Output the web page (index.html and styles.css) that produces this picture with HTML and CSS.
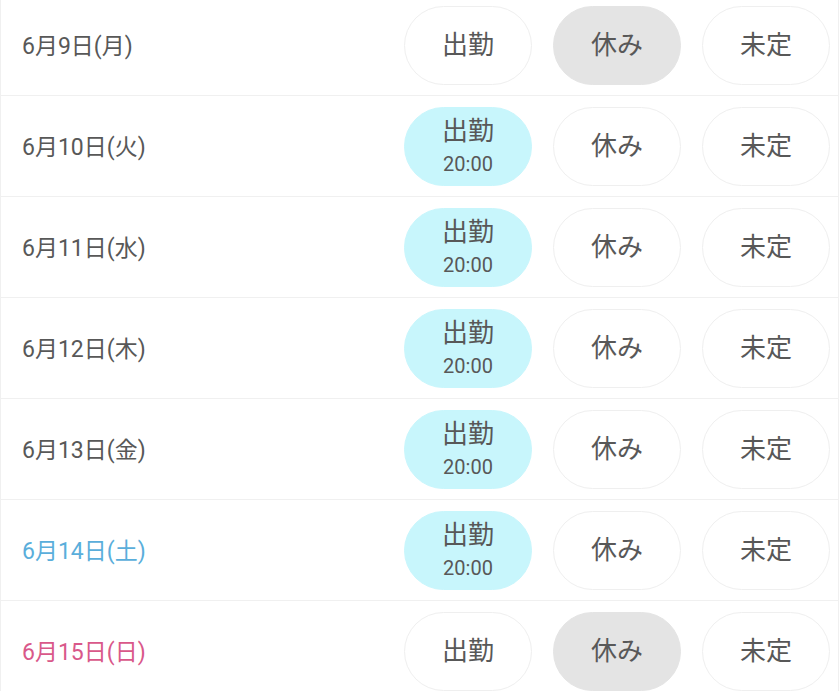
FILE: index.html
```html
<!DOCTYPE html>
<html lang="ja">

<head>
    <meta charset="UTF-8">
    <meta name="viewport" content="width=device-width, initial-scale=1.0">
    <title>シフト提出</title>
    <link rel="stylesheet" href="styles.css">
</head>

<body>
    <div class="shift-list">
        <div class="shift-row">
            <div class="shift-date">6月9日(月)</div>
            <div class="shift-buttons">
                <div class="shift-btn">出勤</div>
                <div class="shift-btn off">休み</div>
                <div class="shift-btn">未定</div>
            </div>
        </div>
        <div class="shift-row">
            <div class="shift-date">6月10日(火)</div>
            <div class="shift-buttons">
                <div class="shift-btn work">出勤<span class="shift-time">20:00</span></div>
                <div class="shift-btn">休み</div>
                <div class="shift-btn">未定</div>
            </div>
        </div>
        <div class="shift-row">
            <div class="shift-date">6月11日(水)</div>
            <div class="shift-buttons">
                <div class="shift-btn work">出勤<span class="shift-time">20:00</span></div>
                <div class="shift-btn">休み</div>
                <div class="shift-btn">未定</div>
            </div>
        </div>
        <div class="shift-row">
            <div class="shift-date">6月12日(木)</div>
            <div class="shift-buttons">
                <div class="shift-btn work">出勤<span class="shift-time">20:00</span></div>
                <div class="shift-btn">休み</div>
                <div class="shift-btn">未定</div>
            </div>
        </div>
        <div class="shift-row">
            <div class="shift-date">6月13日(金)</div>
            <div class="shift-buttons">
                <div class="shift-btn work">出勤<span class="shift-time">20:00</span></div>
                <div class="shift-btn">休み</div>
                <div class="shift-btn">未定</div>
            </div>
        </div>
        <div class="shift-row">
            <div class="shift-date saturday">6月14日(土)</div>
            <div class="shift-buttons">
                <div class="shift-btn work">出勤<span class="shift-time">20:00</span></div>
                <div class="shift-btn">休み</div>
                <div class="shift-btn">未定</div>
            </div>
        </div>
        <div class="shift-row">
            <div class="shift-date sunday">6月15日(日)</div>
            <div class="shift-buttons">
                <div class="shift-btn">出勤</div>
                <div class="shift-btn off">休み</div>
                <div class="shift-btn">未定</div>
            </div>
        </div>
    </div>
</body>

</html>
```

FILE: styles.css
```css
body {
    font-family: Roboto, "Noto Sans CJK JP", sans-serif;
    margin: 0;
    background-color: white;
    color: #585858;
    overflow: hidden;
}

.shift-list {
    width: 839px;
    margin-top: -5px;
    border-left: 1px solid #f0f0f0;
    border-right: 1px solid #f0f0f0;
    box-sizing: border-box;
}

.shift-row {
    display: flex;
    align-items: center;
    height: 101px;
    padding: 0 8px 0 21px;
    border-bottom: 1px solid #f0f0f0;
    box-sizing: border-box;
}

.shift-date {
    flex: 1;
    font-size: 23px;
    margin-top: -2px;
}

.shift-date.saturday {
    color: #5aaedb;
}

.shift-date.sunday {
    color: #d9588a;
}

.shift-buttons {
    display: flex;
    gap: 21px;
}

.shift-btn {
    display: flex;
    flex-direction: column;
    align-items: center;
    justify-content: center;
    width: 128px;
    height: 79px;
    border: 1px solid #efefef;
    border-radius: 40px;
    box-sizing: border-box;
    font-size: 26px;
    line-height: 1.25;
}

.shift-btn.off {
    background-color: #e4e4e4;
    border-color: #e4e4e4;
}

.shift-btn.work {
    background-color: #c8f6fc;
    border-color: #c8f6fc;
}

.shift-time {
    font-size: 20px;
    margin-top: 4px;
}
```
